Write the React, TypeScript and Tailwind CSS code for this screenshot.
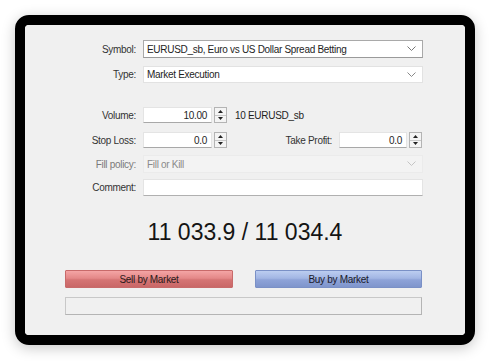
import type { ReactNode } from 'react'

function Chevron({ className = '' }: { className?: string }) {
  return (
    <svg width="9" height="6" viewBox="0 0 9 6" className={className}>
      <path d="M0.5 0.5 L4.5 4.5 L8.5 0.5" fill="none" stroke="currentColor" strokeWidth="1" />
    </svg>
  )
}

function Spinner() {
  return (
    <div className="flex h-full w-[13px] flex-col border border-[#b4b4b4] bg-[#f4f4f4]">
      <div className="flex flex-1 items-center justify-center border-b border-[#c8c8c8]">
        <svg width="5" height="3" viewBox="0 0 5 3">
          <path d="M0 3 L2.5 0 L5 3 Z" fill="#222" />
        </svg>
      </div>
      <div className="flex flex-1 items-center justify-center">
        <svg width="5" height="3" viewBox="0 0 5 3">
          <path d="M0 0 L2.5 3 L5 0 Z" fill="#222" />
        </svg>
      </div>
    </div>
  )
}

function Row({ label, muted, children, className = '' }: { label: string; muted?: boolean; children: ReactNode; className?: string }) {
  return (
    <div className={`flex items-center gap-[7px] ${className}`}>
      <span className={`w-[111px] shrink-0 text-right ${muted ? 'text-[#7a7a7a]' : 'text-[#333]'}`}>{label}</span>
      {children}
    </div>
  )
}

function NumberField({ value, width }: { value: string; width: string }) {
  return (
    <div className="flex h-full items-stretch gap-[2px]">
      <div className={`flex ${width} items-center justify-end border border-[#e4e4e4] border-b-[#a8a8a8] bg-white pr-[4px] text-[#1e1e1e]`}>
        {value}
      </div>
      <Spinner />
    </div>
  )
}

export default function App() {
  return (
    <div className="h-[361px] w-[491px] bg-white p-[15px] text-[10px] tracking-[-0.3px] [font-family:'Liberation_Sans',Arial,sans-serif]">
      <div className="h-[330px] w-[460px] rounded-[14px] border-[10px] border-black shadow-[0_3px_14px_rgba(0,0,0,0.22)]">
        <div className="flex h-full flex-col rounded-[4px] bg-[#f0f0f0] pt-[15px]">
          <Row label="Symbol:" className="h-[18px]">
            <div className="flex h-full w-[280px] items-center justify-between border border-[#a9a9a9] border-b-[#9a9a9a] bg-white pl-[3px] pr-[6px] text-[#1e1e1e]">
              <span>EURUSD_sb, Euro vs US Dollar Spread Betting</span>
              <Chevron className="text-[#777]" />
            </div>
          </Row>

          <Row label="Type:" className="mt-[8px] h-[17px]">
            <div className="flex h-full w-[280px] items-center justify-between border border-[#e2e2e2] bg-white pl-[3px] pr-[6px] text-[#1e1e1e]">
              <span>Market Execution</span>
              <Chevron className="text-[#888]" />
            </div>
          </Row>

          <Row label="Volume:" className="mt-[24px] h-[16px]">
            <NumberField value="10.00" width="w-[69px]" />
            <span className="ml-[1px] text-[#1e1e1e]">10 EURUSD_sb</span>
          </Row>

          <Row label="Stop Loss:" className="mt-[9px] h-[16px]">
            <NumberField value="0.0" width="w-[69px]" />
            <div className="ml-auto flex h-full items-center gap-[7px] pr-[43px]">
              <span className="text-[#333]">Take Profit:</span>
              <NumberField value="0.0" width="w-[68px]" />
            </div>
          </Row>

          <Row label="Fill policy:" muted className="mt-[7px] h-[18px]">
            <div className="flex h-full w-[280px] items-center justify-between border border-[#ebebeb] bg-[#f3f3f3] pl-[3px] pr-[6px] text-[#8a8a8a]">
              <span>Fill or Kill</span>
              <Chevron className="text-[#c4c4c4]" />
            </div>
          </Row>

          <Row label="Comment:" className="mt-[6px] h-[17px]">
            <div className="h-full w-[280px] border border-[#e4e4e4] border-b-[#b0b0b0] bg-white" />
          </Row>

          <div className="mt-[22px] flex h-[28px] items-center justify-center text-[23px] tracking-normal text-[#141414]">
            11 033.9 / 11 034.4
          </div>

          <div className="mt-[24px] flex h-[18px] gap-[22px] pl-[40px]">
            <button className="w-[168px] rounded-[1px] border border-[#c86a6a] bg-[linear-gradient(#f4a5a5,#e48888_45%,#d57474_55%,#c96767)] text-[#2a1a1a]">
              Sell by Market
            </button>
            <button className="w-[167px] rounded-[1px] border border-[#7a90c6] bg-[linear-gradient(#bccdf0,#a2b6e4_45%,#8ea3d8_55%,#7f95cc)] text-[#1a1a2a]">
              Buy by Market
            </button>
          </div>

          <div className="ml-[40px] mt-[9px] h-[18px] w-[357px] border border-[#c8c8c8] border-b-[#b4b4b4] border-r-[#b4b4b4] bg-[#f0f0f0]" />
        </div>
      </div>
    </div>
  )
}
